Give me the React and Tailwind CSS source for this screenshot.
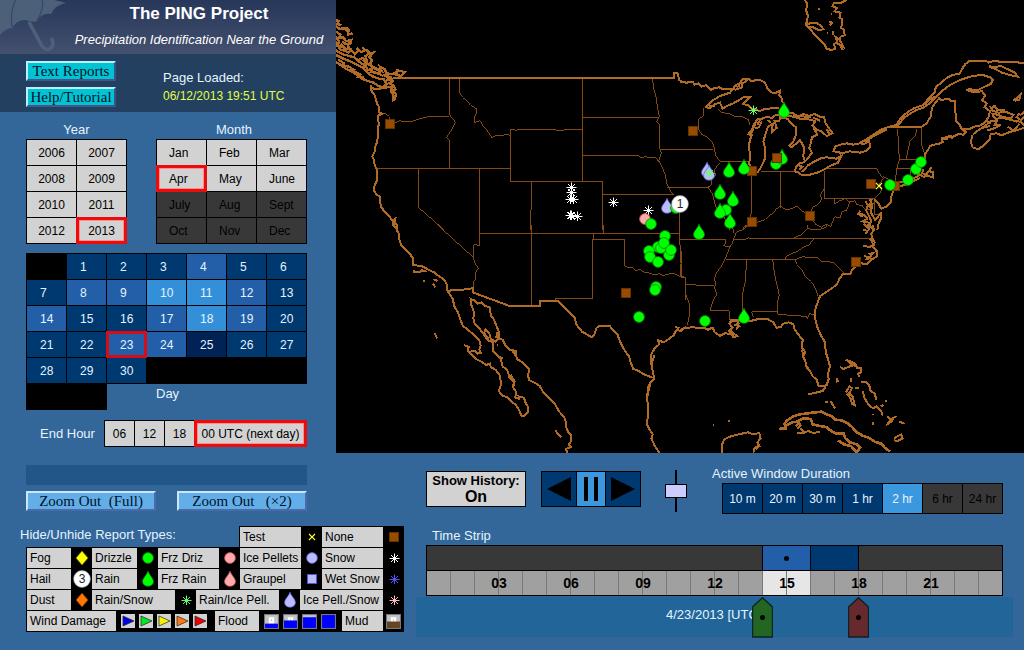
import React, { useState } from "react";

const YEARS = [2006, 2007, 2008, 2009, 2010, 2011, 2012, 2013];
const MONTHS = ["Jan", "Feb", "Mar", "Apr", "May", "June", "July", "Aug", "Sept", "Oct", "Nov", "Dec"];

// Report volume per day of the month, from 0 (fewest) to 3 (most).
const DAY_LEVELS = [1, 1, 1, 2, 1, 1, 1, 2, 2, 3, 3, 2, 1, 2, 1, 1, 2, 3, 2, 1, 1, 1, 2, 2, 0, 1, 1, 1, 1, 1];
const LEVEL_CLASS = ["bg-[#002255]", "bg-[#003870]", "bg-[#225fa8]", "bg-[#3390d8]"];

const SELECTED_LIGHT = "outline-[3px] -outline-offset-2 outline-[#ec0c0c] outline-solid inset-shadow-[0_0_0_3px_#ff9090] z-10";
const SELECTED_DARK = "outline-[3px] -outline-offset-2 outline-[#d80c14] outline-solid z-10";

function PickCell({ children, selected, disabled, onClick, align = "text-center" }) {
  const tone = disabled ? "bg-[#383838] text-black" : "bg-[#d2d2d2] text-black";
  return (
    <button
      type="button"
      disabled={disabled}
      onClick={onClick}
      aria-pressed={selected}
      className={`relative h-[25px] text-[12px] leading-[26px] ${align} ${tone} ${selected ? SELECTED_LIGHT : ""}`}
    >
      {children}
    </button>
  );
}

/* ---------- report symbols, each drawn around 0,0 ---------- */

const DROP = "M0,-8 C1,-4 5.5,-1 5.5,2.5 A5.5,4.8 0 0 1 -5.5,2.5 C-5.5,-1 -1,-4 0,-8Z";

function Sym({ kind, x = 0, y = 0, label = "3" }) {
  const at = `translate(${x} ${y})`;
  switch (kind) {
    case "fog":
      return <path transform={at} d="M0,-7 L6,0 L0,7 L-6,0Z" fill="#ffff00" stroke="#777700" strokeWidth="0.6" />;
    case "dust":
      return <path transform={at} d="M0,-7 L6,0 L0,7 L-6,0Z" fill="#ff7700" stroke="#773300" strokeWidth="0.6" />;
    case "drizzle":
      return <circle transform={at} r="5.4" fill="#00ff00" stroke="#008800" strokeWidth="0.8" />;
    case "frzdriz":
      return <circle transform={at} r="5.4" fill="#ffaaaa" stroke="#bb5555" strokeWidth="0.8" />;
    case "pellets":
      return <circle transform={at} r="5.4" fill="#bbbbff" stroke="#5555cc" strokeWidth="0.8" />;
    case "rain":
      return <path transform={at} d={DROP} fill="#00ff00" stroke="#008800" strokeWidth="0.7" />;
    case "frzrain":
      return <path transform={at} d={DROP} fill="#ffaaaa" stroke="#bb5555" strokeWidth="0.7" />;
    case "rainpell":
      return <path transform={at} d={DROP} fill="#bbbbff" stroke="#5555cc" strokeWidth="0.7" />;
    case "graupel":
      return <rect transform={at} x="-4.5" y="-4.5" width="9" height="9" fill="#bbbbff" stroke="#5555cc" />;
    case "none":
      return <rect transform={at} x="-4.5" y="-4.5" width="9" height="9" fill="#994c00" stroke="#663300" />;
    case "test":
      return <path transform={at} d="M-3,-3 L3,3 M-3,3 L3,-3" stroke="#ffff33" strokeWidth="1.1" />;
    case "snow":
    case "wetsnow":
    case "rainsnow":
    case "icesnow": {
      const color = { snow: "#ffffff", wetsnow: "#5555ff", rainsnow: "#66ff66", icesnow: "#ffbbbb" }[kind];
      return <path transform={at} d="M0.5,-4.5 V5 M-4.5,0.5 H5.5 M-3,-3 L4,4 M-3,4 L4,-3" stroke={color} strokeWidth="1" />;
    }
    case "hail":
      return (
        <g transform={at}>
          <circle r="8.4" fill="#ffffff" stroke="#99a" strokeWidth="0.6" />
          <text y="4" textAnchor="middle" fontSize="12" fill="#222222" fontFamily="Liberation Sans, sans-serif">{label}</text>
        </g>
      );
    default:
      return null;
  }
}

function SymIcon({ kind }) {
  return (
    <svg viewBox="-11 -10 20 20" className="block h-5 w-5" aria-hidden="true">
      <Sym kind={kind} />
    </svg>
  );
}

function Arrow({ color }) {
  return (
    <svg viewBox="0 0 14 14" className="block h-[14px] w-[14px]" aria-hidden="true">
      <rect width="14" height="14" fill="#d2d2d2" />
      <path d="M2,2 L13,7 L2,12Z" fill={color} stroke="#222222" strokeWidth="0.7" />
    </svg>
  );
}

function Flood({ level, color = "#0000ff" }) {
  return (
    <svg viewBox="0 0 14 14" className="block h-[15px] w-[15px]" aria-hidden="true">
      <rect width="14" height="14" fill="#c4c4c4" />
      <path d="M4.5,9 V3 H9.5 V9Z M6.5,5 H7.5 V6.5 H6.5Z" fill="#ffffff" fillRule="evenodd" />
      <rect x="0" y={14 - level} width="14" height={level} fill={color} />
      <rect x="0.5" y="0.5" width="13" height="13" fill="none" stroke="#77777f" />
    </svg>
  );
}

/* ---------- map ---------- */

const COAST_NW =
  "M170,234 H1014 V219 L1024,219 L1027,228 L1030,240 L1038,245 L1050,245 " +
  "M104,254 L104,268 L110,278 L116,286 L120,300 L124,312 L130,322 L130,338 L138,341 L126,347 L128,370 L126,400 L124,425 L118,440 L116,455 L109,470 L114,480 L116,495 L122,508 L122,525 L124,540 L116,555 L113,570 L122,584 L132,590 L134,618 L142,630 L152,640 L162,652 L170,662 L178,656 L176,668 L184,674 L182,690 " +
  "M170,662 L174,680";

const VANCOUVER =
  "M0,60 L8,64 L4,72 L16,76 M0,78 L12,88 L22,84 L34,92 L30,82 L38,90 L36,104 L50,100 M0,95 L14,104 L8,114 L22,112 L30,124 L46,120 L44,130 L28,132 L18,124 M0,110 L10,126 L4,138 L20,142 L14,132 L30,146 L42,148 L34,136 " +
  "M0,125 L12,148 L26,152 L38,158 L46,150 L56,162 L68,152 L62,144 L76,156 L88,150 L80,142 M0,150 L10,158 L24,164 L40,168 L54,172 L66,180 L80,174 L92,182 L88,168 L98,162 L92,148 L104,160 L112,158 L100,172 L108,180 L102,192 " +
  "M0,165 L20,175 L42,184 L62,194 L82,204 L98,222 L112,230 L128,236 L144,238 L152,252 L140,262 L128,258 L112,248 L92,242 L78,236 L62,224 L46,214 L30,206 L16,196 L0,186 M6,178 L24,190 L20,196 L38,200 L52,208 L44,212 L60,216 L74,224 L68,230 L84,232 " +
  "M60,178 L76,190 L88,196 L96,210 L110,204 L104,216 L120,218 L134,224 L126,208 L138,214 L132,200 L146,208 L152,220 L164,222 L178,220 L186,208 L180,224 L194,228 L206,216 L188,212 M84,186 L104,196 L118,206 L128,212 " +
  "M152,236 L164,232 L170,244 L160,250 L172,256 L178,268 L170,276 L180,282 L176,298 L172,300 L172,284 L164,276 L168,262 L154,262 L140,264 L120,268 L108,264 M164,262 L174,272 L170,290 M150,240 L168,238 M80,180 L92,192 L84,200 L96,204 M140,224 L156,230 L150,214";

const STATES_NW =
  "M340,236 V340 L346,352 L358,366 L352,380 L345,392 L332,412 L342,422 V505 M370,236 V275 L380,292 L392,302 L404,316 L420,325 L422,336 L416,350 V368 L432,362 L440,376 L452,388 L460,402 L468,413 L480,407 L500,407 L514,402 L523,408 " +
  "M118,505 H523 M523,388 V545 H800 V690 M523,388 H534 L540,391 L546,388 H656 L660,391 L682,391 L686,388 H739 M739,236 V545 M739,352 H966 M739,466 H908 L916,474 L928,470 L944,474 L958,472 L970,487 " +
  "M950,236 L952,262 L960,290 L964,320 L970,350 L962,366 L972,376 V448 L976,460 L968,482 L978,500 L988,525 L992,550 L1004,574 L1012,584 M800,583 H1010 M972,448 H1050 M994,563 H1050 M586,545 V620 L584,640 V690 M430,505 V690 M247,505 V622 L325,690 " +
  "M132,340 L150,342 L160,350 L162,368 M178,368 L192,362 L208,366 L230,364 L244,358 L262,354 L282,349 H340 M1030,600 V690";

const COAST_SW =
  "M170,0 L178,8 L182,4 L182,16 L190,28 L190,44 L196,62 L210,76 L224,90 L232,102 L232,120 L258,124 L270,130 L280,136 L294,142 L304,150 L316,158 L328,170 L334,182 L334,196 L340,206 L350,222 L356,246 L366,262 L374,286 L380,302 L400,318 L416,332 L430,346 L434,362 L430,374 L434,384 L424,386 L418,378 L402,380 " +
  "M336,198 L346,196 L380,194 L410,190 L410,202 L518,242 H612 V228 H665 L680,242 L694,256 L716,278 L722,300 L738,320 L768,337 L776,326 L782,308 L790,302 L800,304 L820,302 L832,316 L845,330 L852,350 L862,370 L880,396 L884,412 L892,432 L908,438 L924,448 L950,458 " +
  "M955,462 L950,438 L944,408 L946,388 L956,370 L970,358 L966,346 L984,352 L998,342 L1012,332 L1022,314 L1034,318 L1050,305 M955,390 L946,420 M1018,306 L1030,310 M955,460 L942,474 L940,490 L932,512 L936,540 L934,600 L942,616 L950,628 L946,640 L956,662 L970,683 M938,478 L934,520 " +
  "M384,360 L398,366 L396,378 L410,392 L420,402 L436,410 L450,420 L462,416 L464,426 L478,434 L490,448 L494,468 L494,482 L488,498 L500,512 L512,516 L526,530 L540,540 L550,556 L556,572 L562,574 L576,562 L576,546 L568,532 L564,518 L548,514 L550,522 L538,518 L540,500 L532,488 L534,470 L520,456 L514,436 L500,424 L494,400 L484,392 L472,378 L470,352 L456,346 L446,332 L430,310 L416,296 L412,280 L414,262 L406,240 L404,222 L414,226 L424,236 L436,232 L446,242 L462,248 L464,270 L474,284 L482,304 L490,324 L488,338 L478,350 L464,342 L460,326 L448,314 L444,324 L458,342 " +
  "M490,324 L486,340 L500,344 L508,360 L520,374 L540,378 L542,402 L556,410 L568,422 L580,432 L576,452 L580,466 L598,474 L612,484 L622,502 L640,520 L656,536 L670,560 L688,582 L690,604 L696,620 L706,630 L704,650 L698,660 L704,666 L690,672 L694,683 M484,322 L480,340 M524,450 L536,470 L530,484 M528,376 L538,390 " +
  "M232,134 L234,142 L252,142 L258,136 L272,140 M260,168 h8 M292,163 L300,166 L304,170 M290,176 L298,186 M296,325 L300,334 L304,340 M658,614 L664,626 L676,636 L668,630 M490,396 l10,4 M484,361 h3";

const STATES_SW =
  "M305,0 L413,98 M430,0 V62 L418,58 L412,62 V98 L418,118 L428,130 L418,142 L420,160 L412,170 L412,192 M430,25 H1030 M586,0 V242 M803,0 V25 M772,25 V43 H865 V122 L878,128 L888,126 L898,136 L912,134 L926,142 L940,144 L958,150 L970,146 L980,152 L996,148 L1010,144 L1024,150 L1040,158 H1050 M770,43 V220 H660 V228 M1030,0 V50 L1034,70 L1036,156 M1030,43 H1050 M1048,158 V225";

const COAST_NE =
  "M0,245 L18,248 L38,246 L44,254 L56,250 L64,260 L78,256 L92,270 L104,264 L118,262 L130,268 L158,268 L150,278 L120,288 L100,300 L86,312 L78,322 L90,324 L106,312 L120,308 L128,326 L140,318 L156,312 L166,306 L178,300 L190,292 L208,292 L200,300 L190,312 L206,316 L214,326 L226,326 L238,334 L252,328 L280,324 L298,324 " +
  "M158,268 L166,256 L178,250 L188,238 L206,236 L214,244 L230,240 L246,242 L256,250 L262,264 L272,276 L284,280 L300,272 L298,286 L306,296 L308,310 M164,270 L186,262 L184,250 L196,246 L204,238 M170,262 L180,256 M88,318 L104,318 " +
  "M300,344 L286,346 L276,354 L262,350 L246,356 L232,358 L222,372 L216,388 L206,402 L216,404 L210,420 L206,440 L210,462 L208,492 L216,512 L234,516 L246,496 L254,478 L256,448 L250,424 L256,404 L264,380 L278,372 L276,396 L290,384 L284,364 L298,362 L300,352 L322,356 L334,370 L348,382 L348,404 L340,424 L328,436 L334,442 L350,430 L360,420 L366,430 L372,442 L370,470 L376,486 M228,364 L220,386 L210,408 M240,360 L232,374 M262,360 L274,368 M246,364 L236,382 L224,384 " +
  "M320,340 L340,340 L356,350 L370,342 L388,348 L404,342 L420,350 L432,352 L436,368 L446,384 L458,400 L440,408 L424,394 L408,388 L398,376 L406,364 L394,360 L378,356 L360,356 L340,350 L322,348 M400,376 L404,390 L412,404 L396,412 L392,430 L388,444 L396,458 L386,472 L378,482 M398,352 L420,362 M440,388 L450,404 M340,346 L392,352 " +
  "M376,486 L358,490 L348,502 L344,514 L356,518 L366,526 L390,524 L412,518 L434,508 L450,498 L474,488 L484,468 L468,476 L440,472 L424,474 L404,484 L384,496 L374,508 L364,516 M352,494 L368,500 L358,508 M484,462 L478,456 L460,454 L466,440 L480,434 L500,430 L520,434 L540,430 L552,432 L568,424 L570,442 L560,452 L540,458 L510,454 L484,460 M540,428 L560,418 L580,404 L600,390 L622,382 L650,374 L664,352 L686,334 L704,324 L728,316 L744,298 L764,276 L768,260 L784,248 L800,234 L820,224 L838,222 L848,204 L856,192 L866,184 L920,184 L926,188 L944,182 L962,186 L1032,188 " +
  "M556,424 L588,404 L620,388 M652,378 L672,354 L692,340 L710,330 L732,322 L752,308 L770,288 L790,270 L812,254 L840,240 L870,230 L906,224 L930,232 L938,240 L932,252 L910,262 L894,270 L868,268 L858,270 L880,276 L906,274 L916,286 L906,300 L920,310 L914,322 L930,334 L926,350 L916,366 L902,376 L882,380 L868,388 L846,388 M736,306 L764,290 M732,314 L752,296 " +
  "M928,198 L944,202 L962,198 L984,208 L1004,218 L1014,230 L992,226 L966,218 L948,208 L928,200 M930,318 L938,332 L956,338 L978,336 L1000,344 L994,354 L972,352 L952,344 L934,340 M936,322 L944,318 L952,330 L974,330 M1000,302 L1010,294 L1022,282 L1018,300 L1006,302 M1018,340 L1010,352 L1022,360 L1032,350 M1032,336 L1020,346 M1006,362 L1024,366 L1032,376 " +
  "M846,388 L840,376 L828,362 L826,330 L824,304 L812,304 L806,296 L784,300 L778,294 L766,308 L756,324 L752,350 L740,370 L722,382 H622 M846,388 L858,396 L850,404 L836,402 L820,410 L806,408 L800,418 L786,414 L788,426 L776,432 L762,434 L750,438 L744,450 L734,464 L734,478 M786,420 L800,410 L820,414 M730,508 L726,520 L740,522 L754,502 L748,514 L760,516 L758,532 L744,528 L730,530 L716,522 L712,530 L696,536 L676,546 L660,546 M640,568 L656,560 L682,552 L720,534 " +
  "M878,404 L872,426 L878,442 L894,448 L912,436 L930,418 L932,402 L950,400 L964,406 L984,398 L1006,392 L1032,384 M878,404 L896,390 L918,376 L934,362 L950,364 L944,376 L962,376 L940,386 L920,392 M918,360 L932,372 M904,384 L930,378 M938,346 L948,356 L970,354 L1000,362 L1012,366 M984,380 L1000,392 L1018,372 " +
  "M640,572 L634,590 L632,606 L618,620 L604,626 L596,612 L582,598 M576,596 L570,616 L574,640 L586,660 L602,640 L604,654 L596,670 L592,690 M540,632 L536,642 L552,644 L562,656 L548,664 L566,668 L572,684 M556,604 L564,616 L558,630 L566,646 L574,664 L568,676 L580,690 M530,640 L548,650 M552,672 L570,690 M568,598 L574,606 M578,610 L574,630 " +
  "M375,0 L382,12 L378,30 L384,48 L378,74 L388,84 L404,104 L418,118 L434,134 L440,146 L454,150 L466,146 L462,132 L472,126 L466,110 L476,118 L482,110 L494,106 L492,90 L484,84 L486,58 L478,52 L482,38 L464,34 L470,24 L458,18 L462,8 L480,10 L500,0 M476,114 L484,128 L490,140 L480,134 L488,150 M472,130 L482,136 M380,74 L394,68 L412,70 L424,78 L430,88 L416,90 L400,82 L384,80 M414,26 h6 M446,64 l10,4 l-6,8 M440,100 h4 M458,92 v12 M452,42 h3";

const STATES_NE =
  "M0,448 H98 M0,562 H84 L96,552 L94,538 L106,528 L104,508 L120,488 M70,325 L72,346 L56,358 V390 L66,404 L82,412 L98,428 L104,448 L106,466 L122,486 H210 M112,326 L124,338 L144,340 L162,348 L188,350 L204,358 L210,376 M84,562 L98,582 L104,610 L116,640 L132,652 L142,672 L150,690 " +
  "M244,516 H358 M216,524 V610 L214,640 L206,668 L190,690 M301,517 V625 M186,690 L204,678 L222,670 L240,664 L256,658 L266,648 L280,640 L288,628 L302,618 L318,630 L334,626 L350,618 L364,632 L378,640 L392,636 L400,620 L412,614 L424,600 L422,582 L432,568 L433,545 M433,514 V595 H583 V643 H602 M433,505 H590 L598,520 L610,536 L598,552 L606,568 L600,580 L583,595 M610,530 L640,546 " +
  "M392,650 L408,674 L424,682 L440,672 L452,680 L464,650 L480,654 L486,636 L500,630 L510,606 M463,596 V612 L480,602 L496,596 L508,606 L526,602 L530,614 L546,616 L556,628 L574,630 M653,388 L655,425 L658,478 L650,508 L646,542 M710,388 L706,408 L690,424 L684,450 L678,478 M724,380 V430 L730,452 L736,464 M658,478 H712 L722,472 M652,507 H700 L704,524 M692,507 V530";

const COAST_SE =
  "M0,316 L12,310 L40,306 L56,310 L70,308 L84,314 L98,308 L104,322 L120,332 L136,324 L148,328 L154,318 L164,328 L172,334 L160,336 L148,318 L158,308 L148,296 L154,284 L172,284 L176,296 L166,300 L178,304 L168,312 M150,290 L170,288 M172,284 L212,288 L236,282 L262,282 L280,292 L290,308 L302,306 L310,296 L326,292 L340,298 L344,314 L356,330 L368,344 L366,368 L376,382 L368,392 L376,408 L380,428 L390,438 L398,454 L410,464 L416,484 L432,484 L440,480 L446,462 L444,446 L450,424 L444,402 L438,384 L434,350 L422,330 L412,306 L406,284 L404,262 L410,240 L420,214 L440,200 L456,190 L472,176 L478,162 L490,146 L512,146 L516,134 L526,124 M364,374 L374,392 M378,420 L388,436 M436,486 L428,498 L404,504 L384,508 " +
  "M540,114 L560,118 L572,106 L590,94 L592,78 L580,66 L584,52 L576,38 L574,26 L582,14 L578,0 M550,62 L566,66 L580,62 M552,92 L568,98 L580,84 L566,88 M550,14 L562,18 L556,28 M560,0 L570,14 M556,104 L574,98 M570,40 L580,58 " +
  "M480,426 L490,432 L504,426 L516,422 L508,412 L498,404 L514,410 L526,416 L532,430 L544,428 L542,442 L534,446 L538,456 M516,416 L526,424 M498,502 L508,484 L516,490 L508,504 L518,514 L524,540 L516,536 L512,520 L500,506 M514,460 V472 M526,488 L536,490 M544,472 L558,470 L568,480 L570,496 L584,506 L590,526 M548,498 L554,520 L566,540 L580,550 L590,544 L604,560 L608,572 M618,524 V532 M602,544 L610,540 M622,574 L632,582 L624,596 L634,590 L640,578 L650,574 M658,590 L674,596 M642,642 L652,634 L664,628 L668,640 L652,648 L642,646 M470,458 V470 L476,466 M434,530 H444 M452,528 L458,540 L466,550 M578,568 v3 M580,590 v10 " +
  "M125,683 L126,660 L132,644 L146,636 L176,628 L204,622 L218,628 L238,624 L242,640 L232,652 L238,664 L224,668 L220,683 M236,656 L228,674 M148,586 v6 M98,601 h3 " +
  "M352,612 L362,602 L358,592 L348,604 M350,624 H372 L384,618 L400,624 L420,620 M362,610 L376,624";

const CUBA =
  "M296,612 L316,610 L314,596 L322,586 L340,574 L360,568 L390,564 L424,560 L440,568 L452,572 L466,584 L484,586 L502,594 L516,606 L530,622 L548,632 L566,638 L584,650 L604,656 L614,668 L630,680 M318,602 L336,592 L352,590 L370,580 L392,582 L398,598 L414,602 L438,606 L454,618 L470,626 L490,624 L496,640 L510,652 L530,658 L540,668 L530,682 L514,664 L492,658 L474,646";

const STATES_SE =
  "M0,43 H135 L138,56 L128,62 L150,66 M158,43 H198 L204,38 L210,41 H576 M137,103 H348 M196,0 L186,16 L170,20 L164,34 L158,52 L148,70 L136,100 L124,124 L110,142 L104,158 L106,176 L104,190 L110,208 L98,230 L90,258 H148 V286 M158,0 L160,24 M18,178 L80,182 L102,180 M0,60 L4,84 L2,152 L18,158 V210 L30,240 L30,262 L22,300 " +
  "M200,103 L196,170 L188,205 V262 M278,103 L284,150 L298,210 L292,232 L294,268 L378,274 L382,282 L388,266 L404,270 M294,260 H215 L220,276 M346,103 L350,118 L364,132 L374,152 L394,170 L406,190 L414,214 M348,103 L368,95 L390,98 L412,97 L424,108 L460,112 L492,144 M402,43 L386,60 L368,68 L350,80 L330,88 L318,96 L316,103 M342,38 L362,30 L384,10 L396,14 L420,14 L438,6 L442,0 M384,0 V12";

const TILES = [
  { at: "translate(0 0) scale(0.33333)", coast: COAST_NW, states: STATES_NW },
  { at: "translate(344 0) scale(0.33333)", coast: COAST_NE, states: STATES_NE },
  { at: "translate(0 225) scale(0.33333)", coast: COAST_SW, states: STATES_SW },
  { at: "translate(344 225) scale(0.33333)", coast: COAST_SE, states: STATES_SE },
];

const REPORTS = [
  ["rainsnow", 417, 110], ["drizzle", 440, 164], ["rain", 446, 157], ["none", 441, 158], ["none", 54, 124], ["none", 357, 131], ["none", 416, 171],
  ["none", 416, 222], ["none", 474, 216], ["none", 535, 184], ["none", 559, 186], ["none", 290, 293], ["none", 520, 262],
  ["test", 543, 186], ["drizzle", 554, 185], ["drizzle", 572, 180], ["drizzle", 580, 169], ["drizzle", 585, 162],
  ["rain", 448, 110], ["rain", 393, 170], ["rain", 408, 167], ["rain", 384, 192], ["rain", 397, 199], ["drizzle", 390, 210],
  ["rain", 384, 211], ["rain", 394, 221], ["rain", 363, 232], ["rain", 408, 316], ["drizzle", 369, 321], ["drizzle", 303, 317],
  ["rainpell", 371, 170], ["rainpell", 373, 173], ["rainsnow", 373, 173], ["rainpell", 331, 206], ["drizzle", 340, 208], ["hail", 344, 204],
  ["snow", 235, 187], ["snow", 235, 192], ["snow", 234, 199], ["snow", 237, 199], ["snow", 234, 215], ["snow", 235, 215], ["snow", 241, 216],
  ["snow", 277, 202], ["snow", 312, 210], ["frzdriz", 309, 219], ["drizzle", 315, 224],
  ["drizzle", 329, 236], ["drizzle", 322, 247], ["drizzle", 325, 248], ["drizzle", 328, 243], ["drizzle", 313, 251], ["drizzle", 314, 257],
  ["drizzle", 333, 255], ["drizzle", 335, 250], ["drizzle", 322, 262], ["drizzle", 320, 287], ["drizzle", 319, 290],
];

function ReportMap() {
  return (
    <svg viewBox="0 0 688 453" className="block h-auto w-full" role="img" aria-label="Precipitation report map">
      <rect width="688" height="453" fill="#000000" />
      <g fill="none" shapeRendering="crispEdges">
        {TILES.map((t) => (
          <path key={t.at} transform={t.at} d={t.states} stroke="#844a16" strokeWidth="3" />
        ))}
        {TILES.map((t) => (
          <path key={t.at} transform={t.at} d={t.coast} stroke="#b06b26" strokeWidth="6" />
        ))}
        <path transform={TILES[0].at} d={VANCOUVER} stroke="#b06b26" strokeWidth="7" />
        <path transform={TILES[3].at} d={CUBA} stroke="#b06b26" strokeWidth="8" />
      </g>
      {REPORTS.map(([kind, x, y], i) => (
        <Sym key={i} kind={kind} x={x} y={y} label="1" />
      ))}
    </svg>
  );
}

/* ---------- legend ---------- */

function Entry({ label, kind, width }) {
  return (
    <button type="button" className={`flex h-5 items-center bg-black text-left ${width}`}>
      <span className="h-5 flex-1 bg-[#d2d2d2] pl-[3px] leading-5 whitespace-nowrap">{label}</span>
      <SymIcon kind={kind} />
    </button>
  );
}

function Legend() {
  return (
    <section className="mt-[15px] text-[12px] text-black">
      <div className="flex">
        <h2 className="flex-1 pl-5 text-[13px] leading-[18px] text-[#e4f4ff]">Hide/Unhide Report Types:</h2>
        <div className="flex gap-px bg-black pt-px pr-px pl-px">
          <Entry label="Test" kind="test" width="w-[81px]" />
          <Entry label="None" kind="none" width="w-[81px]" />
        </div>
      </div>
      <div className="ml-[26px] flex flex-col gap-px bg-black p-px">
        <div className="flex gap-px">
          <Entry label="Fog" kind="fog" width="w-[64px]" />
          <Entry label="Drizzle" kind="drizzle" width="w-[65px]" />
          <Entry label="Frz Driz" kind="frzdriz" width="w-[81px]" />
          <Entry label="Ice Pellets" kind="pellets" width="w-[81px]" />
          <Entry label="Snow" kind="snow" width="w-[81px]" />
        </div>
        <div className="flex gap-px">
          <Entry label="Hail" kind="hail" width="w-[64px]" />
          <Entry label="Rain" kind="rain" width="w-[65px]" />
          <Entry label="Frz Rain" kind="frzrain" width="w-[81px]" />
          <Entry label="Graupel" kind="graupel" width="w-[81px]" />
          <Entry label="Wet Snow" kind="wetsnow" width="w-[81px]" />
        </div>
        <div className="flex gap-px">
          <Entry label="Dust" kind="dust" width="w-[64px]" />
          <Entry label="Rain/Snow" kind="rainsnow" width="w-[103px]" />
          <Entry label="Rain/Ice Pell." kind="rainpell" width="w-[103px]" />
          <Entry label="Ice Pell./Snow" kind="icesnow" width="w-[103px]" />
        </div>
        <div className="flex h-5 leading-5">
          <button type="button" className="flex w-[188px] text-left">
            <span className="w-[89px] bg-[#d2d2d2] pl-[3px]">Wind Damage</span>
            <span className="flex h-5 flex-1 items-center gap-1 pl-[5px]">
              <Arrow color="#0000e8" />
              <Arrow color="#00e822" />
              <Arrow color="#f8f000" />
              <Arrow color="#ff7711" />
              <Arrow color="#ee0000" />
            </span>
          </button>
          <button type="button" className="flex w-[127px] text-left">
            <span className="w-[44px] bg-[#d2d2d2] pl-[3px]">Flood</span>
            <span className="flex h-5 flex-1 items-center gap-1 pl-[5px]">
              <Flood level={5} />
              <Flood level={8} />
              <Flood level={11} />
              <Flood level={14} />
            </span>
          </button>
          <button type="button" className="flex flex-1 text-left">
            <span className="w-[41px] bg-[#d2d2d2] pl-[3px]">Mud</span>
            <span className="flex h-5 flex-1 items-center justify-center">
              <Flood level={7} color="#664422" />
            </span>
          </button>
        </div>
      </div>
    </section>
  );
}

/* ---------- header ---------- */

function Header() {
  return (
    <header className="relative h-[54px] overflow-hidden bg-linear-to-b from-[#26375a] to-[#44506e] text-white">
      <svg viewBox="0 0 70 54" className="absolute top-0 left-0 h-[54px] w-[70px]" aria-hidden="true">
        <path d="M0,0 H54 Q60,1 66,3 Q55,5 51,14 Q42,12 36,22 L29,21 Q19,17 12,28 Q6,28 0,35Z" fill="#4c6079" />
        <path d="M16,0 Q10,9 12,27 M42,0 Q45,6 37,21" fill="none" stroke="#34486a" strokeWidth="1.2" />
        <path d="M29,22 L42,46 Q46,52 51,48 Q55,44 51,38" fill="none" stroke="#4c6079" strokeWidth="3.6" />
      </svg>
      <div className="relative pl-[62px] text-center">
        <h1 className="text-[17px] leading-7 font-bold">The PING Project</h1>
        <p className="text-[13px] leading-6 whitespace-nowrap italic">Precipitation Identification Near the Ground</p>
      </div>
    </header>
  );
}

const BEVEL = "h-5 border-2 font-['Liberation_Serif',serif] text-[15px] leading-4 text-[#001028] whitespace-pre";

/* ---------- page ---------- */

export default function App() {
  const [year, setYear] = useState(2013);
  const [month, setMonth] = useState("Apr");
  const [day, setDay] = useState(23);
  const [endHour, setEndHour] = useState("00 UTC (next day)");
  const [span, setSpan] = useState("2 hr");
  const [history, setHistory] = useState(true);

  return (
    <main className="min-h-screen bg-[#336699] font-['Liberation_Sans',Arial,sans-serif] text-[13px] text-[#e4f4ff]">
      <div className="flex items-start">
        <aside className="w-[336px] shrink-0">
          <Header />
          <div className="flex h-[58px] bg-[#234060] pt-[7px] pl-[26px]">
            <div className="flex w-[90px] flex-col gap-[6px]">
              <button type="button" className={`${BEVEL} border-t-[#b8f0ff] border-r-[#335588] border-b-[#445588] border-l-[#b8f0ff] bg-[#00c4d4]`}>Text Reports</button>
              <button type="button" className={`${BEVEL} border-t-[#b8f0ff] border-r-[#335588] border-b-[#445588] border-l-[#b8f0ff] bg-[#00c4d4]`}>Help/Tutorial</button>
            </div>
            <div className="pt-[7px] pl-[47px] leading-[19px]">
              <p>Page Loaded:</p>
              <p className="text-[12px] text-[#e0ff44]">06/12/2013 19:51 UTC</p>
            </div>
          </div>

          <div className="flex gap-[29px] pt-2 pl-[26px]">
            <section className="w-[101px]">
              <h2 className="text-center leading-[19px]">Year</h2>
              <div className="grid grid-cols-2 gap-px bg-black p-px">
                {YEARS.map((y) => (
                  <PickCell key={y} selected={y === year} onClick={() => setYear(y)}>{y}</PickCell>
                ))}
              </div>
            </section>
            <section className="w-[151px]">
              <h2 className="pl-[5px] text-center leading-[19px]">Month</h2>
              <div className="grid grid-cols-3 gap-px bg-black p-px">
                {MONTHS.map((m, i) => (
                  <PickCell key={m} align="pl-3 text-left" selected={m === month} disabled={i > 5} onClick={() => setMonth(m)}>{m}</PickCell>
                ))}
              </div>
            </section>
          </div>

          <section className="mt-[9px] ml-[26px] w-[281px]">
            <div className="grid grid-cols-7 gap-px bg-black p-px">
              <span className="h-[25px]" />
              {DAY_LEVELS.map((level, i) => (
                <button
                  key={i}
                  type="button"
                  onClick={() => setDay(i + 1)}
                  aria-pressed={day === i + 1}
                  className={`relative h-[25px] pl-[13px] text-left text-[12px] leading-[26px] text-[#e4f4ff] ${LEVEL_CLASS[level]} ${day === i + 1 ? SELECTED_DARK : ""}`}
                >
                  {i + 1}
                </button>
              ))}
            </div>
            <div className="flex">
              <span className="h-[26px] w-[81px] bg-black" />
              <h2 className="pl-[49px] leading-[20px]">Day</h2>
            </div>
          </section>

          <section className="mt-[10px] ml-[26px] flex w-[281px]">
            <h2 className="flex-1 pl-[14px] leading-[27px]">End Hour</h2>
            <div className="grid grid-cols-[29px_29px_29px_111px] gap-px bg-black p-px">
              {["06", "12", "18", "00 UTC (next day)"].map((h) => (
                <PickCell key={h} selected={h === endHour} onClick={() => setEndHour(h)}>{h}</PickCell>
              ))}
            </div>
          </section>
        </aside>

        <section className="min-w-0 flex-1 bg-black">
          <ReportMap />
        </section>
      </div>

      <div className="flex items-start">
        <div className="w-[404px] shrink-0 pt-3">
          <div className="ml-[26px] h-5 w-[281px] bg-[#225588]" />
          <div className="mt-[6px] ml-[26px] flex w-[281px] justify-between">
            <button type="button" className={`${BEVEL} w-[130px] border-t-[#cce6ff] border-r-[#4a6aa8] border-b-[#4a6aa8] border-l-[#cce6ff] bg-[#62aee8]`}>{"Zoom Out  (Full)"}</button>
            <button type="button" className={`${BEVEL} w-[130px] border-t-[#cce6ff] border-r-[#4a6aa8] border-b-[#4a6aa8] border-l-[#cce6ff] bg-[#62aee8]`}>{"Zoom Out   (×2)"}</button>
          </div>
          <Legend />
        </div>

        <div className="min-w-0 flex-1 pt-[11px] pr-[11px] pl-3">
          <div className="flex items-start px-[10px]">
            <button
              type="button"
              onClick={() => setHistory(!history)}
              className="mt-[7px] h-9 w-[100px] border border-black bg-[#d2d2d2] font-bold text-black"
            >
              <span className="block text-[13px] leading-4">Show History:</span>
              <span className="block text-[16px] leading-4">{history ? "On" : "Off"}</span>
            </button>
            <div className="mt-[7px] ml-[15px] flex h-9 w-[100px] gap-px bg-black p-px">
              <button type="button" aria-label="Step back" className="flex flex-1 items-center justify-center bg-[#003870]">
                <svg viewBox="0 0 24 24" className="h-6 w-6" aria-hidden="true"><path d="M0,12 L24,0 V24Z" /></svg>
              </button>
              <button type="button" aria-label="Pause" className="flex w-7 items-center justify-center bg-[#3b98de]">
                <svg viewBox="0 0 14 24" className="h-6 w-[14px]" aria-hidden="true"><path d="M0,0 H4 V24 H0Z M10,0 H14 V24 H10Z" /></svg>
              </button>
              <button type="button" aria-label="Step forward" className="flex flex-1 items-center justify-center bg-[#003870]">
                <svg viewBox="0 0 24 24" className="h-6 w-6" aria-hidden="true"><path d="M24,12 L0,0 V24Z" /></svg>
              </button>
            </div>
            <input
              type="range"
              aria-label="Playback speed"
              defaultValue={50}
              className="mt-[6px] ml-6 h-[42px] w-[22px] appearance-none bg-[linear-gradient(#000,#000)] bg-[length:2px_100%] bg-center bg-no-repeat [writing-mode:vertical-lr] [&::-webkit-slider-thumb]:h-[14px] [&::-webkit-slider-thumb]:w-[22px] [&::-webkit-slider-thumb]:appearance-none [&::-webkit-slider-thumb]:border [&::-webkit-slider-thumb]:border-black [&::-webkit-slider-thumb]:bg-[#ccccff]"
            />
            <section className="ml-auto w-[291px]">
              <h2 className="leading-[19px]">Active Window Duration</h2>
              <div className="ml-[10px] grid grid-cols-7 gap-px bg-black p-px">
                {["10 m", "20 m", "30 m", "1 hr", "2 hr", "6 hr", "24 hr"].map((s, i) => (
                  <button
                    key={s}
                    type="button"
                    disabled={i > 4}
                    onClick={() => setSpan(s)}
                    aria-pressed={span === s}
                    className={`h-[29px] text-[12px] whitespace-nowrap ${i > 4 ? "bg-[#383838] text-black" : span === s ? "bg-[#3b98de]" : "bg-[#003870]"}`}
                  >
                    {s}
                  </button>
                ))}
              </div>
            </section>
          </div>

          <h2 className="mt-3 pl-4 leading-[19px]">Time Strip</h2>
          <div className="mx-[10px] border-y border-l border-black bg-black text-black">
            <div className="grid h-6 grid-cols-[14fr_2fr_2fr_6fr]">
              <span className="border-r border-black bg-[#383838]" />
              <span className="flex items-center justify-center border-r border-black bg-[#225fa8]">
                <span className="h-[5px] w-[5px] rounded-full bg-black" />
              </span>
              <span className="border-r border-black bg-[#003870]" />
              <span className="border-r border-black bg-[#383838]" />
            </div>
            <div className="mt-px grid h-6 grid-cols-24">
              {Array.from({ length: 24 }, (_, h) => (
                <span
                  key={h}
                  className={`relative border-r ${h === 23 ? "border-black" : "border-[#777777]"} ${h === 14 || h === 15 ? "bg-[#e6e6e6]" : "bg-[#a0a0a0]"}`}
                >
                  {h > 0 && h % 3 === 0 && (
                    <span className="absolute top-0 left-0 z-10 -translate-x-1/2 text-[14px] leading-6 font-bold">
                      {String(h).padStart(2, "0")}
                    </span>
                  )}
                </span>
              ))}
            </div>
          </div>
          <div className="mt-px h-10 bg-[#226699]">
            <div className="relative mx-[10px] h-10">
              <p className="pl-[240px] leading-9">4/23/2013 [UTC]</p>
              <button type="button" aria-label="Window start" className="absolute top-0 left-[calc(100%*14/24)] -ml-[11px]">
                <svg viewBox="0 0 21 41" className="block h-[41px] w-[21px]" aria-hidden="true">
                  <path d="M0.5,10 L10.5,0.7 L20.5,10 V40 H0.5Z" fill="#226622" stroke="#0c2228" strokeWidth="1.4" />
                  <circle cx="10.5" cy="20.5" r="2.5" />
                </svg>
              </button>
              <button type="button" aria-label="Window end" className="absolute top-0 left-[calc(100%*18/24)] -ml-[11px]">
                <svg viewBox="0 0 21 41" className="block h-[41px] w-[21px]" aria-hidden="true">
                  <path d="M0.5,10 L10.5,0.7 L20.5,10 V40 H0.5Z" fill="#662a2e" stroke="#0c2228" strokeWidth="1.4" />
                  <circle cx="10.5" cy="20.5" r="2.5" />
                </svg>
              </button>
            </div>
          </div>
        </div>
      </div>
    </main>
  );
}
